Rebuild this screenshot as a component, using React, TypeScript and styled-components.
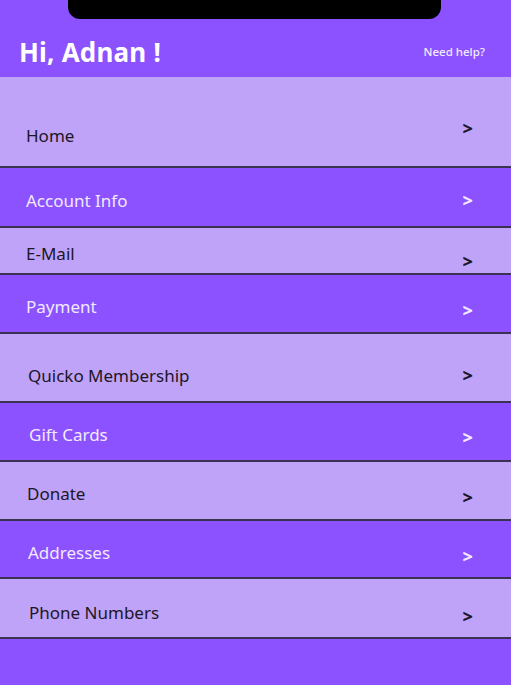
import { createGlobalStyle, styled } from 'styled-components';

const GlobalStyle = createGlobalStyle`
  html, body {
    margin: 0;
    padding: 0;
    background: #8c52ff;
  }
  * {
    box-sizing: border-box;
  }
`;

interface MenuItem {
  label: string;
  height: number;
  textShift: number;
  arrowShift: number;
  indent: number;
}

const items: MenuItem[] = [
  { label: 'Home', height: 91, textShift: 14, arrowShift: 6, indent: 26 },
  { label: 'Account Info', height: 60, textShift: 3, arrowShift: 3, indent: 26 },
  { label: 'E-Mail', height: 47, textShift: 3, arrowShift: 10, indent: 26 },
  { label: 'Payment', height: 59, textShift: 3, arrowShift: 6, indent: 26 },
  { label: 'Quicko Membership', height: 69, textShift: 8, arrowShift: 7, indent: 28 },
  { label: 'Gift Cards', height: 59, textShift: 3, arrowShift: 5, indent: 29 },
  { label: 'Donate', height: 59, textShift: 3, arrowShift: 6, indent: 27 },
  { label: 'Addresses', height: 58, textShift: 3, arrowShift: 7, indent: 28 },
  { label: 'Phone Numbers', height: 60, textShift: 4, arrowShift: 8, indent: 29 },
];

const App = () => {
  return (
    <>
      <GlobalStyle />
      <Screen>
        <Notch />
        <Header>
          <Title>Hi, Adnan !</Title>
          <Help>Need help?</Help>
        </Header>
        <Menu>
          {items.map((item, i) => (
            <Row key={item.label} $light={i % 2 === 0} $height={item.height} $indent={item.indent}>
              <Label $shift={item.textShift}>{item.label}</Label>
              <Arrow $shift={item.arrowShift}>&gt;</Arrow>
            </Row>
          ))}
        </Menu>
        <Footer />
      </Screen>
    </>
  );
};

const Screen = styled.div`
  position: relative;
  width: 511px;
  height: 685px;
  overflow: hidden;
  display: flex;
  flex-direction: column;
  background: #8c52ff;
  font-family: 'Noto Sans', 'Open Sans', sans-serif;
`;

const Notch = styled.div`
  position: absolute;
  top: 0;
  left: 68px;
  width: 373px;
  height: 19px;
  background: #000;
  border-radius: 0 0 12px 12px;
`;

const Header = styled.header`
  height: 77px;
  flex-shrink: 0;
  display: flex;
  align-items: center;
  justify-content: space-between;
  padding: 27px 26px 0 19px;
`;

const Title = styled.h1`
  margin: 0;
  color: #fff;
  font-size: 26px;
  font-weight: 700;
  letter-spacing: 0.2px;
`;

const Help = styled.span`
  color: #f1ebff;
  font-size: 11.5px;
  font-weight: 500;
  margin-top: -2px;
`;

const Menu = styled.nav`
  display: flex;
  flex-direction: column;
`;

const Row = styled.div<{ $light: boolean; $height: number; $indent: number }>`
  height: ${(p) => p.$height}px;
  display: flex;
  align-items: center;
  justify-content: space-between;
  padding: 0 38px 0 ${(p) => p.$indent}px;
  background: ${(p) => (p.$light ? '#bfa3f8' : '#8c52ff')};
  border-bottom: 2px solid #3a3252;
  color: ${(p) => (p.$light ? '#1c1626' : '#f1eaff')};
`;

const Label = styled.span<{ $shift: number }>`
  font-size: 17px;
  transform: translateY(${(p) => p.$shift}px);
`;

const Arrow = styled.span<{ $shift: number }>`
  font-size: 18px;
  font-weight: 800;
  transform: translateY(${(p) => p.$shift}px);
`;

const Footer = styled.div`
  flex: 1;
`;

export default App;
